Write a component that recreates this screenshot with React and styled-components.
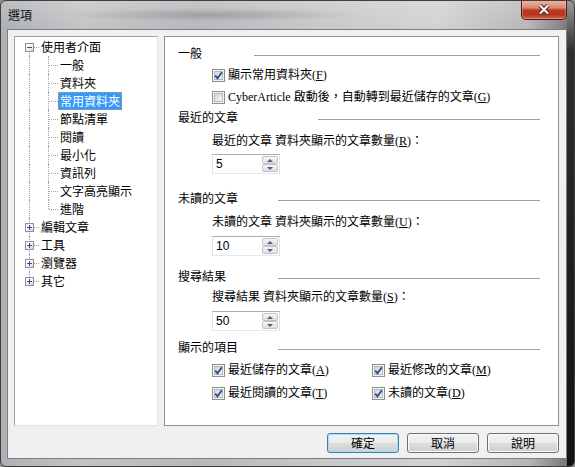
import React from 'react';
import styled, { createGlobalStyle } from 'styled-components';

// GLOBAL
const GlobalStyle = createGlobalStyle`
    html, body
    {
        margin: 0;
        padding: 0;
        background: #8f8f8f;
    }

    body
    {
        font-family: "Noto Sans CJK TC", "Liberation Sans", sans-serif;
        font-size: 12px;
        color: #000;
    }
`;

const LABEL_FONT = `"Liberation Serif", "Noto Sans CJK TC", serif`;

// WINDOW FRAME
const Window = styled.div`
    width: 575px;
    height: 467px;
    box-sizing: border-box;
    border: 1px solid #3e3e3e;
    border-radius: 6px;
    padding: 0 7px 7px 6px;
    display: flex;
    flex-direction: column;
    overflow: hidden;
    background:
        linear-gradient(180deg, #9a9a9a 0, #2e2e2e 50px, #121212 100%) right top / 7px 100% no-repeat,
        radial-gradient(ellipse 150px 7px at 210px 14px, rgba(80, 80, 80, 0.28), transparent),
        linear-gradient(180deg, rgba(255, 255, 255, 0.18), rgba(255, 255, 255, 0) 28px),
        linear-gradient(90deg, #aeb1b4 0%, #c2c4c6 14%, #b6b8bb 34%, #c6c7c9 55%, #d2d2d2 76%, #b7b7b7 92%, #6d6d6d 100%);
`;

const TitleBar = styled.div`
    height: 28px;
    flex: none;
    display: flex;
    justify-content: space-between;
    align-items: flex-start;
`;

const Title = styled.span`
    margin: 6px 0 0 1px;
    line-height: 16px;
    font-size: 12px;
    color: #111;
`;

const CloseButton = styled.div`
    width: 46px;
    height: 20px;
    margin-top: -1px;
    box-sizing: border-box;
    border: 1px solid #4c1a12;
    border-top: none;
    border-radius: 0 0 5px 5px;
    display: flex;
    align-items: center;
    justify-content: center;
    background: linear-gradient(180deg, #ecb8aa 0%, #d98573 42%, #c23a20 52%, #b43420 78%, #d56a4e 100%);
    box-shadow: inset 0 0 0 1px rgba(255, 255, 255, 0.25);
`;

// CLIENT AREA
const Client = styled.div`
    height: 430px;
    box-sizing: border-box;
    border: 1px solid #7a7d81;
    background: #f0f0f0;
    padding: 6px 7px 5px 6px;
    display: flex;
    flex-direction: column;
`;

const Body = styled.div`
    height: 390px;
    display: flex;
    gap: 6px;
`;

// TREE
const Tree = styled.div`
    width: 144px;
    flex: none;
    box-sizing: border-box;
    background: #fff;
    border: 1px solid;
    border-color: #a0a0a0 #e3e3e3 #e3e3e3 #a0a0a0;
    padding: 1px 0 0 5px;
`;

const TreeRow = styled.div`
    display: flex;
    align-items: center;
    height: 18px;
`;

const Guide = styled.span`
    position: relative;
    width: 19px;
    height: 18px;
    flex: none;
    display: flex;
    align-items: center;

    &::before
    {
        content: '';
        position: absolute;
        left: 9px;
        top: ${p => (p.$kind === 'start' ? '9px' : '0')};
        bottom: ${p => (p.$kind === 'end' ? '9px' : '0')};
        border-left: 1px dotted #a0a0a0;
    }

    &::after
    {
        content: '';
        display: ${p => (p.$kind === 'pipe' ? 'none' : 'block')};
        position: absolute;
        left: 10px;
        width: 9px;
        top: 9px;
        border-top: 1px dotted #a0a0a0;
    }
`;

const Expander = styled.span`
    position: relative;
    z-index: 1;
    width: 9px;
    height: 9px;
    margin-left: 5px;
    box-sizing: border-box;
    border: 1px solid #919191;
    background: linear-gradient(135deg, #ffffff 30%, #d4d4d4);
    display: flex;
    align-items: center;
    justify-content: center;
`;

const TreeLabel = styled.span`
    height: 16px;
    line-height: 16px;
    padding: 0 1px;
    border: 1px dotted ${p => (p.$selected ? '#c89650' : 'transparent')};
    background: ${p => (p.$selected ? '#3399ff' : 'transparent')};
    color: ${p => (p.$selected ? '#fff' : '#000')};
    white-space: nowrap;
`;

// SETTINGS PANEL
const Panel = styled.div`
    flex: 1;
    box-sizing: border-box;
    background: #fff;
    border: 1px solid #8e8f8f;
    padding: 8px 18px 0 13px;
    font-family: ${LABEL_FONT};
`;

const GroupHeading = styled.div`
    display: flex;
    align-items: center;
    height: 18px;
    margin-top: ${p => p.$gap || 0}px;
`;

const HeadingText = styled.span`
    width: ${p => p.$ruleAt}px;
    flex: none;
    line-height: 18px;
`;

const Rule = styled.span`
    flex: 1;
    height: 0;
    margin-top: 2px;
    border-top: 1px solid #a0a0a0;
`;

const Indent = styled.div`
    margin-left: 34px;
    margin-top: ${p => p.$gap || 0}px;
`;

const FieldLabel = styled.div`
    height: 18px;
    line-height: 18px;
    white-space: nowrap;
`;

const Key = styled.u`
    text-underline-offset: 1px;
`;

const CheckRow = styled.label`
    display: flex;
    align-items: center;
    gap: 3px;
    height: 18px;
    line-height: 18px;
    white-space: nowrap;
`;

const CheckBox = styled.span`
    width: 13px;
    height: 13px;
    flex: none;
    box-sizing: border-box;
    border: 1px solid #8e8f8f;
    display: flex;
    align-items: center;
    justify-content: center;
    background: linear-gradient(135deg, #c9ced4, #f6f6f6 85%);
    box-shadow: inset 0 0 0 1px #f4f4f4, inset 0 0 0 2px #b3b8be;
`;

const CheckGrid = styled.div`
    display: grid;
    grid-template-columns: 160px auto;
    row-gap: 5px;
    margin: 4px 0 0 34px;
`;

// SPIN BOX
const SpinBox = styled.div`
    width: 68px;
    height: 20px;
    box-sizing: border-box;
    border: 1px solid;
    border-color: #abadb3 #dbdfe6 #e3e9ef #e2e3ea;
    background: #fff;
    padding: 1px;
    display: flex;
    margin-top: ${p => p.$gap || 0}px;
`;

const SpinValue = styled.span`
    flex: 1;
    padding-left: 2px;
    font-family: "Liberation Sans", "DejaVu Sans", sans-serif;
    font-size: 12px;
    line-height: 16px;
`;

const SpinButtons = styled.div`
    width: 16px;
    display: flex;
    flex-direction: column;
`;

const SpinButton = styled.span`
    flex: 1;
    box-sizing: border-box;
    border: 1px solid #c3c3c3;
    border-radius: 2px;
    background: linear-gradient(180deg, #f7f7f7, #dedede);
    display: flex;
    align-items: center;
    justify-content: center;

    &::before
    {
        content: '';
        border-left: 3px solid transparent;
        border-right: 3px solid transparent;
        ${p => (p.$down ? 'border-top' : 'border-bottom')}: 3px solid #4d6185;
    }
`;

// BUTTONS
const ButtonRow = styled.div`
    display: flex;
    justify-content: flex-end;
    gap: 8px;
    margin-top: 7px;
`;

const DialogButton = styled.button`
    width: 72px;
    height: 20px;
    box-sizing: border-box;
    padding: 0;
    border: 1px solid ${p => (p.$primary ? '#3c7fb1' : '#707070')};
    border-radius: 3px;
    font-family: "Noto Sans CJK TC", sans-serif;
    font-size: 12px;
    line-height: 16px;
    color: #000;
    background: linear-gradient(180deg, #f2f2f2 0%, #ebebeb 48%, #dddddd 52%, #cfcfcf 100%);
    box-shadow: inset 0 0 0 1px ${p => (p.$primary ? '#a6e1f8' : '#fcfcfc')};
`;

// DATA
const treeRows = [
    { label: '使用者介面', guides: ['start'], expander: 'minus' },
    { label: '一般', guides: ['pipe', 'tee'] },
    { label: '資料夾', guides: ['pipe', 'tee'] },
    { label: '常用資料夾', guides: ['pipe', 'tee'], selected: true },
    { label: '節點清單', guides: ['pipe', 'tee'] },
    { label: '閱讀', guides: ['pipe', 'tee'] },
    { label: '最小化', guides: ['pipe', 'tee'] },
    { label: '資訊列', guides: ['pipe', 'tee'] },
    { label: '文字高亮顯示', guides: ['pipe', 'tee'] },
    { label: '進階', guides: ['pipe', 'end'] },
    { label: '編輯文章', guides: ['tee'], expander: 'plus' },
    { label: '工具', guides: ['tee'], expander: 'plus' },
    { label: '瀏覽器', guides: ['tee'], expander: 'plus' },
    { label: '其它', guides: ['end'], expander: 'plus' },
];

const shownItems = [
    { text: '最近儲存的文章', key: 'A' },
    { text: '最近修改的文章', key: 'M' },
    { text: '最近閱讀的文章', key: 'T' },
    { text: '未讀的文章', key: 'D' },
];

// SMALL PIECES
const ExpanderGlyph = ({ type }) => (
    <svg width="7" height="7" viewBox="0 0 7 7">
        <path d="M1 3.5H6" stroke="#2f4f93" strokeWidth="1" />
        {type === 'plus' && <path d="M3.5 1V6" stroke="#2f4f93" strokeWidth="1" />}
    </svg>
);

const Check = ({ checked }) => (
    <CheckBox>
        {checked && (
            <svg width="11" height="11" viewBox="0 0 11 11">
                <path d="M2.2 5.6L4.5 8.2L8.9 2.2" fill="none" stroke="#2a4d8c" strokeWidth="1.8" />
            </svg>
        )}
    </CheckBox>
);

const Spin = ({ value, gap }) => (
    <SpinBox $gap={gap}>
        <SpinValue>{value}</SpinValue>
        <SpinButtons>
            <SpinButton />
            <SpinButton $down />
        </SpinButtons>
    </SpinBox>
);

const Heading = ({ text, ruleAt, gap }) => (
    <GroupHeading $gap={gap}>
        <HeadingText $ruleAt={ruleAt}>{text}</HeadingText>
        <Rule />
    </GroupHeading>
);

// COMPONENT DEFINITION
const App = () =>
{
    return (
        <>
            <GlobalStyle />
            <Window>
                <TitleBar>
                    <Title>選項</Title>
                    <CloseButton>
                        <svg width="14" height="11" viewBox="0 0 14 11">
                            <path d="M3 1.5L11 9.5M11 1.5L3 9.5" stroke="#4a2018" strokeWidth="4" />
                            <path d="M3 1.5L11 9.5M11 1.5L3 9.5" stroke="#f4f4f4" strokeWidth="2.2" />
                        </svg>
                    </CloseButton>
                </TitleBar>

                <Client>
                    <Body>
                        <Tree>
                            {treeRows.map((row, index) => (
                                <TreeRow key={index}>
                                    {row.guides.map((kind, g) => (
                                        <Guide key={g} $kind={kind}>
                                            {row.expander && g === 0 && (
                                                <Expander>
                                                    <ExpanderGlyph type={row.expander} />
                                                </Expander>
                                            )}
                                        </Guide>
                                    ))}
                                    <TreeLabel $selected={row.selected}>{row.label}</TreeLabel>
                                </TreeRow>
                            ))}
                        </Tree>

                        <Panel>
                            <Heading text="一般" ruleAt={76} />
                            <Indent $gap={3}>
                                <CheckRow>
                                    <Check checked />
                                    <span>顯示常用資料夾(<Key>F</Key>)</span>
                                </CheckRow>
                            </Indent>
                            <Indent $gap={4}>
                                <CheckRow>
                                    <Check />
                                    <span>CyberArticle 啟動後，自動轉到最近儲存的文章(<Key>G</Key>)</span>
                                </CheckRow>
                            </Indent>

                            <Heading text="最近的文章" ruleAt={140} gap={3} />
                            <Indent $gap={5}>
                                <FieldLabel>最近的文章 資料夾顯示的文章數量(<Key>R</Key>)：</FieldLabel>
                                <Spin value="5" gap={4} />
                            </Indent>

                            <Heading text="未讀的文章" ruleAt={100} gap={16} />
                            <Indent $gap={5}>
                                <FieldLabel>未讀的文章 資料夾顯示的文章數量(<Key>U</Key>)：</FieldLabel>
                                <Spin value="10" gap={5} />
                            </Indent>

                            <Heading text="搜尋結果" ruleAt={100} gap={12} />
                            <Indent $gap={2}>
                                <FieldLabel>搜尋結果 資料夾顯示的文章數量(<Key>S</Key>)：</FieldLabel>
                                <Spin value="50" gap={5} />
                            </Indent>

                            <Heading text="顯示的項目" ruleAt={100} gap={8} />
                            <CheckGrid>
                                {shownItems.map(item => (
                                    <CheckRow key={item.key}>
                                        <Check checked />
                                        <span>{item.text}(<Key>{item.key}</Key>)</span>
                                    </CheckRow>
                                ))}
                            </CheckGrid>
                        </Panel>
                    </Body>

                    <ButtonRow>
                        <DialogButton $primary>確定</DialogButton>
                        <DialogButton>取消</DialogButton>
                        <DialogButton>說明</DialogButton>
                    </ButtonRow>
                </Client>
            </Window>
        </>
    );
};

export default App;
